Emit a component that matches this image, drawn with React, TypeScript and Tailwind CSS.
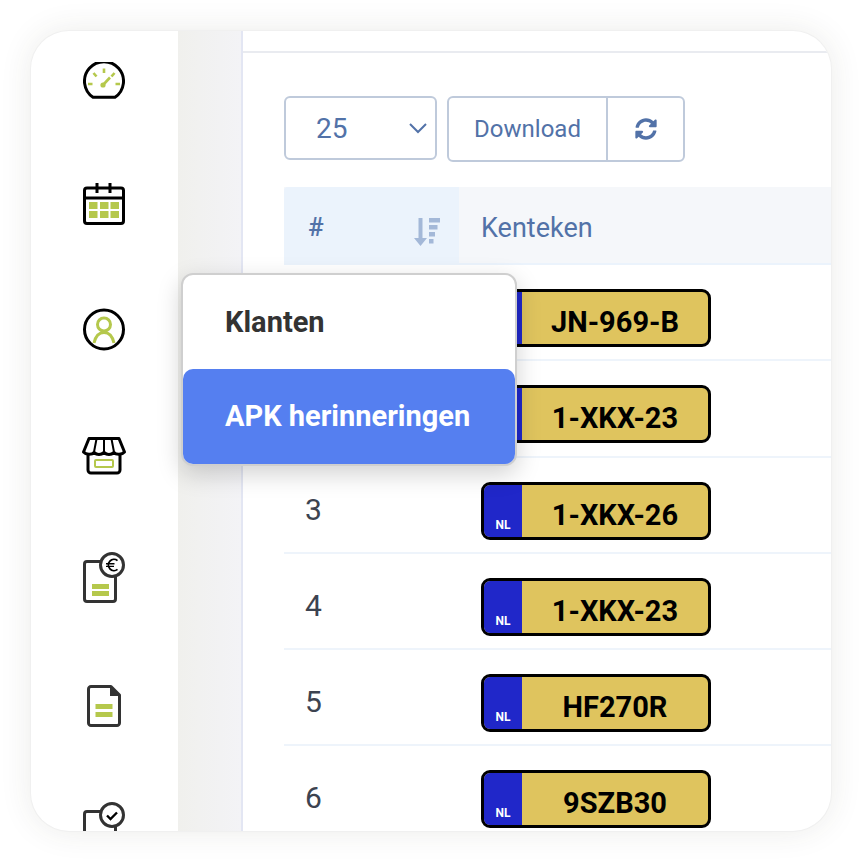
import { FaSyncAlt } from "react-icons/fa";

const olive = "#b5c84c";

const GaugeIcon = () => (
  <svg width="42" height="37" viewBox="0 0 42 37" fill="none">
    <path d="M10 35.3 A19.5 19.5 0 1 1 32 35.3 Z" stroke="#000" strokeWidth="3" strokeLinejoin="round" />
    <g stroke={olive} strokeWidth="2.6">
      <path d="M21 6.5 V11" />
      <path d="M10.5 11 L13.5 14.5" />
      <path d="M31.5 11 L28.5 14.5" />
      <path d="M5 22 H9.5" />
      <path d="M32.5 22 H37" />
      <path d="M20 23 L27 15.5" />
    </g>
    <circle cx="20" cy="23" r="2.6" fill={olive} />
  </svg>
);

const CalendarIcon = () => (
  <svg width="42" height="42" viewBox="0 0 42 42" fill="none">
    <rect x="1.5" y="5" width="39" height="35.5" rx="2.5" stroke="#000" strokeWidth="3" />
    <path d="M1.5 15 H40.5" stroke="#000" strokeWidth="3" />
    <path d="M14 0 V10 M27 0 V10" stroke="#000" strokeWidth="3" />
    <g fill={olive}>
      <rect x="6" y="19" width="8.5" height="7" />
      <rect x="17" y="19" width="8.5" height="7" />
      <rect x="27.5" y="19" width="8.5" height="7" />
      <rect x="6" y="28" width="8.5" height="7" />
      <rect x="17" y="28" width="8.5" height="7" />
      <rect x="27.5" y="28" width="8.5" height="7" />
    </g>
  </svg>
);

const PersonIcon = () => (
  <svg width="42" height="43" viewBox="0 0 42 43" fill="none">
    <circle cx="21" cy="16.5" r="6.5" stroke={olive} strokeWidth="3" />
    <path d="M11 35 C12.5 28.5 16 24.5 21 24.5 C26 24.5 29.5 28.5 31 35" stroke={olive} strokeWidth="3" />
    <circle cx="21" cy="21.5" r="19.5" stroke="#000" strokeWidth="3" />
  </svg>
);

const ShopIcon = () => (
  <svg width="44" height="38" viewBox="0 0 44 38" fill="none">
    <path d="M6 17 V33 A3 3 0 0 0 9 36 H35 A3 3 0 0 0 38 33 V17" stroke="#000" strokeWidth="3" />
    <path
      d="M7 1.5 H37 L42.5 15 C40 18 34 18 32 15.5 C29 18 25 18 22 15.5 C19 18 15 18 12 15.5 C10 18 4 18 1.5 15 Z"
      fill="#fff"
      stroke="#000"
      strokeWidth="3"
      strokeLinejoin="round"
    />
    <path d="M14.5 2 L12 15 M29.5 2 L32 15 M22 2 V15" stroke="#000" strokeWidth="2" />
    <rect x="13" y="23" width="18" height="7" rx="1" stroke={olive} strokeWidth="2" />
  </svg>
);

const BadgeDoc = ({ check }: { check?: boolean }) => (
  <svg width="42" height="51" viewBox="0 0 42 51" fill="none">
    <rect x="1.5" y="9.5" width="31" height="40" rx="2.5" stroke="#333" strokeWidth="3" />
    <rect x="9" y="32" width="17" height="5" fill={olive} />
    <rect x="9" y="39" width="17" height="5" fill={olive} />
    <circle cx="29" cy="13" r="11.5" fill="#fff" stroke="#333" strokeWidth="3" />
    {check ? (
      <path d="M24 13.5 L27.5 17 L34 10.5" stroke="#000" strokeWidth="2.4" />
    ) : (
      <g stroke="#000" strokeWidth="1.8">
        <path d="M34.5 8.6 A5.6 5.6 0 1 0 34.5 17.4" />
        <path d="M23 11.8 H31.5 M23 14.4 H31" strokeWidth="1.4" />
      </g>
    )}
  </svg>
);

const DocIcon = () => (
  <svg width="34" height="42" viewBox="0 0 34 42" fill="none">
    <path
      d="M4 1.5 H24 L32.5 10 V38 A2.5 2.5 0 0 1 30 40.5 H4 A2.5 2.5 0 0 1 1.5 38 V4 A2.5 2.5 0 0 1 4 1.5 Z"
      stroke="#333"
      strokeWidth="3"
      strokeLinejoin="round"
    />
    <path d="M23 1.5 V11 H32.5 Z" fill="#333" />
    <rect x="8.5" y="19" width="17" height="5" fill={olive} />
    <rect x="8.5" y="27" width="17" height="5" fill={olive} />
  </svg>
);

const SortIcon = () => (
  <svg width="28" height="30" viewBox="0 0 28 30" fill="#a3b8d8">
    <path d="M5.5 1 H9.5 V21 H14 L7.5 29 L1 21 H5.5 Z" />
    <rect x="16" y="1" width="11" height="4.5" />
    <rect x="16" y="8" width="8.5" height="4.5" />
    <rect x="16" y="15" width="6" height="4.5" />
    <rect x="16" y="22" width="4.5" height="4.5" />
  </svg>
);

const rows = [
  { nr: 1, plate: "JN-969-B" },
  { nr: 2, plate: "1-XKX-23" },
  { nr: 3, plate: "1-XKX-26" },
  { nr: 4, plate: "1-XKX-23" },
  { nr: 5, plate: "HF270R" },
  { nr: 6, plate: "9SZB30" },
];

const Plate = ({ text }: { text: string }) => (
  <div className="flex h-[58px] w-[230px] overflow-hidden rounded-[9px] border-[3px] border-black bg-[#dfc45e]">
    <div className="flex w-[38px] shrink-0 items-end justify-center bg-[#2027c9] pb-[4px] text-[12px] leading-[16px] font-bold text-white">
      NL
    </div>
    <div className="flex-1 pt-[8px] text-center text-[29px] leading-[44px] font-bold text-black">{text}</div>
  </div>
);

export default function App() {
  return (
    <div className="h-[862px] w-[862px] bg-white p-[31px] font-['Roboto',sans-serif]">
      <div className="relative flex h-[800px] w-[800px] overflow-hidden rounded-[38px] bg-white shadow-[0_0_0_1px_#f0f0f0,0_0_32px_rgba(60,60,40,0.1)]">
        {/* icon sidebar */}
        <div className="flex w-[147px] shrink-0 flex-col items-center pr-[1px]">
          <div className="mt-[31px]">
            <GaugeIcon />
          </div>
          <div className="mt-[84px]">
            <CalendarIcon />
          </div>
          <div className="mt-[83px]">
            <PersonIcon />
          </div>
          <div className="mt-[86px]">
            <ShopIcon />
          </div>
          <div className="mt-[77px]">
            <BadgeDoc />
          </div>
          <div className="mt-[82px]">
            <DocIcon />
          </div>
          <div className="mt-[75px]">
            <BadgeDoc check />
          </div>
        </div>
        <div className="w-[63px] shrink-0 bg-gradient-to-r from-[#f0f0ed] to-[#f3f3f6]" />
        {/* main */}
        <div className="flex-1 border-l-2 border-[#e3e6f3]">
          <div className="h-[22px] border-b-2 border-[#e9ebf0]" />
          <div className="pt-[43px] pl-[41px]">
            <div className="flex items-start gap-[10px] text-[#5272a8]">
              <div className="flex h-[64px] w-[153px] items-center justify-between rounded-[6px] border-2 border-[#bfcadb] pr-[7px] pl-[30px] text-[28px]">
                <span className="mt-[1px]">25</span>
                <svg width="20" height="12" viewBox="0 0 20 12" fill="none" stroke="#5272a8" strokeWidth="2">
                  <path d="M2 2 L10 10 L18 2" />
                </svg>
              </div>
              <div className="flex h-[66px] w-[238px] rounded-[6px] border-2 border-[#bfcadb]">
                <div className="flex w-[159px] items-center justify-center border-r-2 border-[#bfcadb] text-[24px]">
                  Download
                </div>
                <div className="flex flex-1 items-center justify-center text-[22px]">
                  <FaSyncAlt />
                </div>
              </div>
            </div>
            <div className="mt-[25px] flex h-[78px] border-b-2 border-[#ebf3fc] bg-[#f5f7fa] text-[27px] text-[#5272a8]">
              <div className="flex w-[175px] items-center justify-between rounded-tl-[4px] bg-[#ebf3fc] pr-[18px] pl-[24px]">
                <span className="mt-[4px] text-[26px] font-medium">#</span>
                <span className="mt-[13px]">
                  <SortIcon />
                </span>
              </div>
              <div className="flex items-center pt-[6px] pl-[22px]">Kenteken</div>
            </div>
            {rows.map((row) => (
              <div key={row.nr} className="flex h-[96.25px] border-b-2 border-[#eef4fb] pt-[24px]">
                <div className="w-[197px] pt-[3px] pl-[21px] text-[30px] leading-[50px] text-[#3c4350]">{row.nr}</div>
                <Plate text={row.plate} />
              </div>
            ))}
          </div>
        </div>
        {/* menu over the table */}
        <div className="absolute top-[242px] left-[150px] h-[193px] w-[336px] rounded-[12px] border-2 border-[#cfcfcf] bg-white shadow-[0_8px_24px_rgba(0,0,0,0.18)]">
          <div className="h-[94px] pl-[42px] text-[29px] leading-[94px] font-bold text-[#333]">Klanten</div>
          <div className="h-[95px] rounded-[10px] bg-[#557ff0] pl-[42px] text-[29px] leading-[94px] font-bold text-white">
            APK herinneringen
          </div>
        </div>
      </div>
    </div>
  );
}
